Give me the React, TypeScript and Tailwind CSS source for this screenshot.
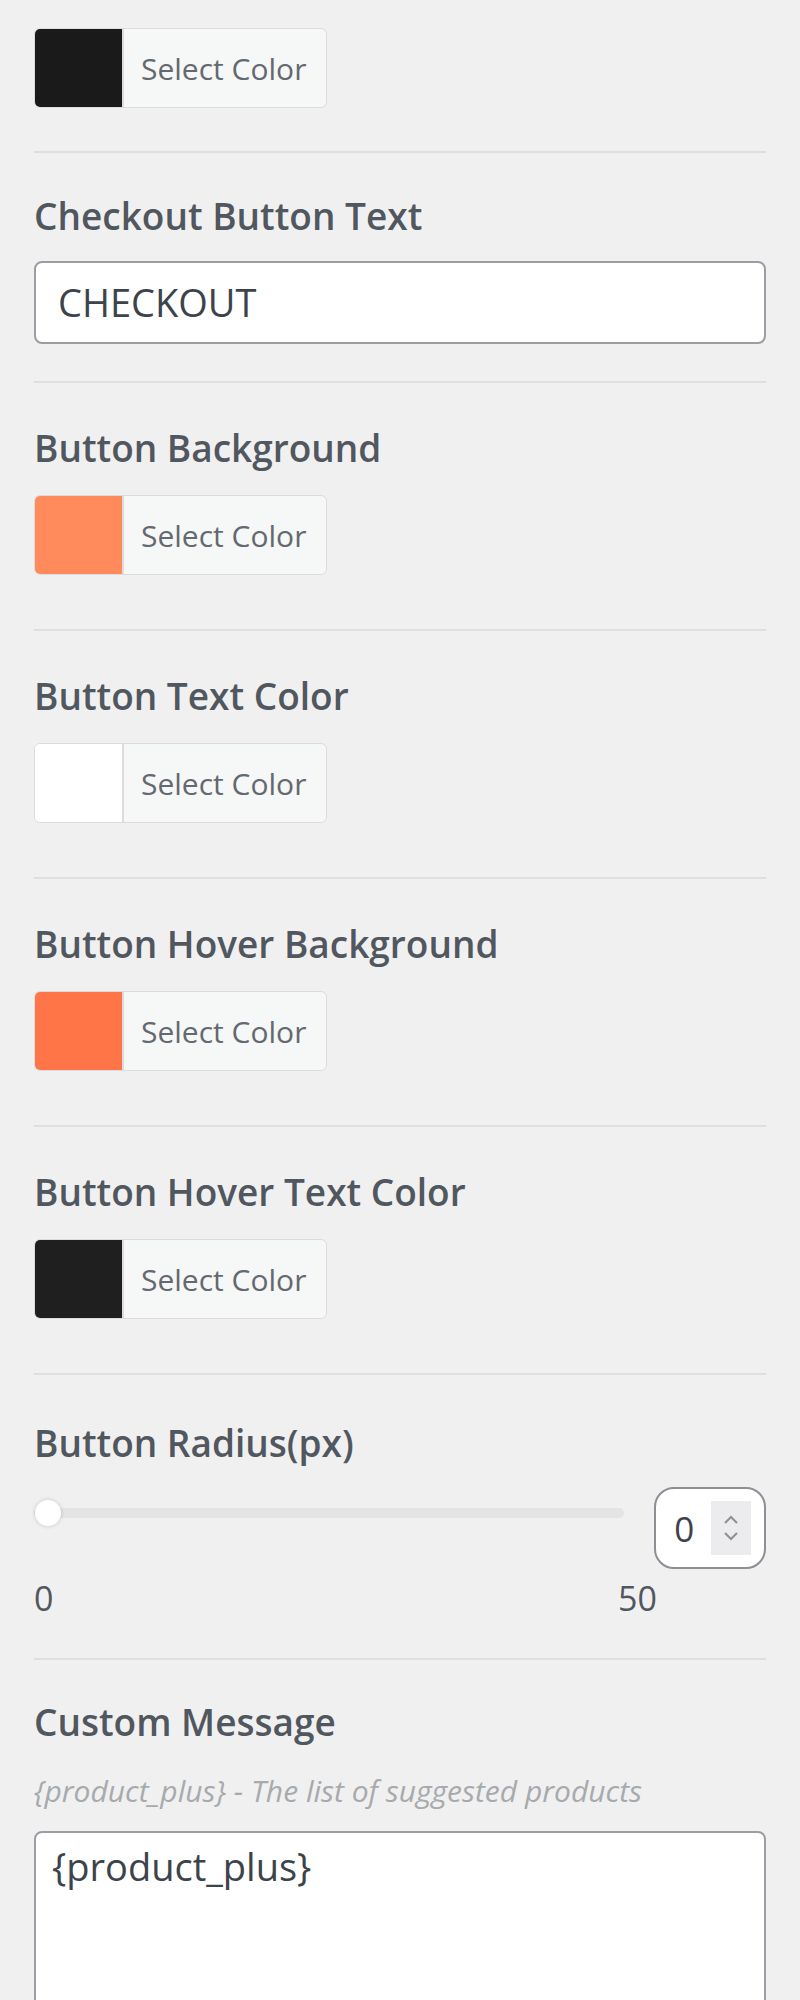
import React from "react";

const font = { fontFamily: '"Open Sans", "Noto Sans", sans-serif' };

function Label({ children }: { children: React.ReactNode }) {
  return (
    <div className="text-[37px] leading-[48px] font-semibold text-[#50575e]">
      {children}
    </div>
  );
}

function Swatch({ color }: { color: string }) {
  return (
    <div className="flex h-[80px] w-[293px] rounded-[6px] border border-[#dcdcde] bg-[#f6f7f7] overflow-hidden">
      <div className="w-[89px] h-full border-r-2 border-[#dcdcde]" style={{ backgroundColor: color }} />
      <div className="flex items-center pl-[17px] text-[30px] text-[#646970]">Select Color</div>
    </div>
  );
}

function ColorSection({ label, color }: { label: string; color: string }) {
  return (
    <div className="pt-[41px] pb-[54px] border-b-2 border-[#dfdfe1]">
      <Label>{label}</Label>
      <div className="mt-[23px]">
        <Swatch color={color} />
      </div>
    </div>
  );
}

export default function App() {
  return (
    <div className="min-h-[2000px] bg-[#f0f0f1] px-[34px] overflow-hidden" style={font}>
      <div className="pt-[28px] pb-[43px] border-b-2 border-[#dfdfe1]">
        <Swatch color="#1a1a1a" />
      </div>

      <div className="pt-[39px] pb-[37px] border-b-2 border-[#dfdfe1]">
        <Label>Checkout Button Text</Label>
        <div className="mt-[21px] h-[83px] rounded-[8px] border-2 border-[#9a9da2] bg-white flex items-center pl-[22px] text-[38px] text-[#3c434a]">
          CHECKOUT
        </div>
      </div>

      <ColorSection label="Button Background" color="#ff8a5b" />
      <ColorSection label="Button Text Color" color="#ffffff" />
      <ColorSection label="Button Hover Background" color="#ff7548" />
      <ColorSection label="Button Hover Text Color" color="#1f1f1f" />

      <div className="pt-[44px] pb-[42px] border-b-2 border-[#dfdfe1]">
        <Label>Button Radius(px)</Label>
        <div className="mt-[20px] flex items-start">
          <div className="w-[591px] relative h-[82px]">
            <div className="mt-[21px] h-[10px] rounded-full bg-[#e4e4e5]" />
            <div className="absolute left-[1px] top-[13px] w-[26px] h-[26px] rounded-full bg-white shadow-[0_0_4px_rgba(0,0,0,0.18)]" />
          </div>
          <div className="ml-[30px] w-[112px] h-[82px] rounded-[20px] border-2 border-[#8c8f94] bg-white flex items-center">
            <span className="ml-[18px] text-[35px] text-[#3c434a] leading-none">0</span>
            <div className="ml-[17px] w-[40px] h-[54px] bg-[#ececee] flex flex-col items-center justify-center gap-[6px]">
              <svg width="16" height="10" viewBox="0 0 16 10" fill="none">
                <path d="M2 8 L8 2 L14 8" stroke="#8c8f94" strokeWidth="2" />
              </svg>
              <svg width="16" height="10" viewBox="0 0 16 10" fill="none">
                <path d="M2 2 L8 8 L14 2" stroke="#8c8f94" strokeWidth="2" />
              </svg>
            </div>
          </div>
        </div>
        <div className="mt-[11px] w-[623px] flex justify-between text-[34px] leading-[36px] text-[#50575e]">
          <span>0</span>
          <span>50</span>
        </div>
      </div>

      <div className="pt-[38px]">
        <Label>Custom Message</Label>
        <div className="mt-[25px] text-[30px] leading-[40px] italic text-[#a7aaad]">
          {"{product_plus} - The list of suggested products"}
        </div>
        <div className="mt-[20px] h-[260px] rounded-[8px] border-2 border-[#9a9da2] bg-white pt-[11px] pl-[16px] text-[38px] leading-[44px] text-[#3c434a]">
          {"{product_plus}"}
        </div>
      </div>
    </div>
  );
}
